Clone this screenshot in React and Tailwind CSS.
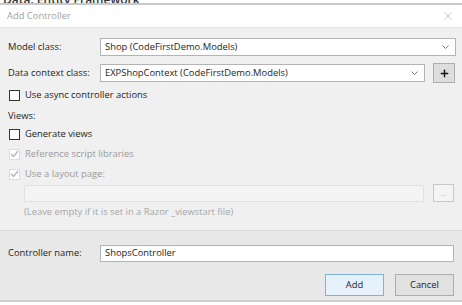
import { X, Plus } from 'lucide-react'

const Chevron = () => (
  <svg width="7" height="4" viewBox="0 0 7 4" className="shrink-0">
    <path d="M0.5 0.5 L3.5 3.5 L6.5 0.5" fill="none" stroke="#7a7a7a" strokeWidth="1" />
  </svg>
)

const Select = ({ value, width }) => (
  <div className={`${width} h-[18px] bg-white border border-[#b4b4b4] flex items-center justify-between pl-[4px] pr-[6px] text-[#1e1e1e]`}>
    <span>{value}</span>
    <Chevron />
  </div>
)

const Check = ({ checked, disabled, label }) => (
  <div className="flex items-center h-[14px] pl-[9px]">
    <div className={`w-[11px] h-[11px] bg-white border flex items-center justify-center ${disabled ? 'border-[#dcdcdc]' : 'border-[#333333]'}`}>
      {checked && (
        <svg width="9" height="8" viewBox="0 0 9 8">
          <path d="M1 4 L3.5 6.5 L8 1" fill="none" stroke={disabled ? '#b5b5b5' : '#333'} strokeWidth="1.3" />
        </svg>
      )}
    </div>
    <span className={`ml-[5px] ${disabled ? 'text-[#9a9a9a]' : 'text-[#1e1e1e]'}`}>{label}</span>
  </div>
)

export default function App() {
  return (
    <div className="w-[462px] h-[305px] bg-white overflow-hidden text-[9.4px] text-[#1e1e1e]" style={{ fontFamily: '"Open Sans", "Noto Sans", sans-serif' }}>
      <div className="h-[3px] overflow-hidden">
        <div className="-mt-[9px] pl-[3px] text-[12px] font-semibold text-[#333]">Data: Entity Framework</div>
      </div>
      <div className="border-t-2 border-[#c9c9c9]">
        <div className="h-[22px] bg-white flex items-center justify-between pl-[7px] pr-[8px]">
          <span className="text-[#a3a3a3]">Add Controller</span>
          <X size={12} strokeWidth={1.2} color="#9a9a9a" />
        </div>

        <div className="h-[203px] bg-[#f0f0f0] border-t border-[#e6e6e6] pt-[10px]">
          <div className="flex items-center h-[18px]">
            <span className="w-[100px] pl-[8px]">Model class:</span>
            <Select value="Shop (CodeFirstDemo.Models)" width="w-[356px]" />
          </div>
          <div className="flex items-center h-[20px] mt-[7px]">
            <span className="w-[100px] pl-[8px]">Data context class:</span>
            <Select value="EXPShopContext (CodeFirstDemo.Models)" width="w-[325px]" />
            <div className="ml-[8px] w-[22px] h-[20px] bg-[#dedede] border border-[#adadad] flex items-center justify-center">
              <Plus size={11} strokeWidth={3} color="#111" />
            </div>
          </div>
          <div className="mt-[5px]">
            <Check label="Use async controller actions" />
          </div>
          <div className="h-[14px] mt-[7px] pl-[8px] flex items-center">Views:</div>
          <div className="mt-[4px]">
            <Check label="Generate views" />
          </div>
          <div className="mt-[6px]">
            <Check checked disabled label="Reference script libraries" />
          </div>
          <div className="mt-[6px]">
            <Check checked disabled label="Use a layout page:" />
          </div>
          <div className="flex items-center h-[18px] mt-[3px] pl-[24px]">
            <div className="w-[400px] h-[17px] bg-[#f4f4f4] border border-[#e0e0e0]" />
            <div className="ml-[9px] w-[21px] h-[18px] bg-[#f4f4f4] border border-[#c8c8c8] flex items-center justify-center text-[#b0b0b0] text-[8px] leading-none">...</div>
          </div>
          <div className="h-[14px] mt-[3px] pl-[24px] flex items-center text-[#a6a6a6]">
            (Leave empty if it is set in a Razor _viewstart file)
          </div>
        </div>

        <div className="h-[72px] bg-[#e8e8e8] border-t border-[#dadada] border-b-2 border-b-[#cfcfcf] pt-[13px]">
          <div className="flex items-center h-[18px]">
            <span className="w-[100px] pl-[8px]">Controller name:</span>
            <div className="w-[354px] h-[17px] bg-white border border-[#b4b4b4] flex items-center pl-[4px]">ShopsController</div>
          </div>
          <div className="flex justify-end gap-[11px] pr-[8px] mt-[12px]">
            <div className="w-[59px] h-[22px] bg-[#e5f1fb] border border-[#7eb0e0] flex items-center justify-center">Add</div>
            <div className="w-[59px] h-[22px] bg-[#e1e1e1] border border-[#adadad] flex items-center justify-center">Cancel</div>
          </div>
        </div>
      </div>
    </div>
  )
}
